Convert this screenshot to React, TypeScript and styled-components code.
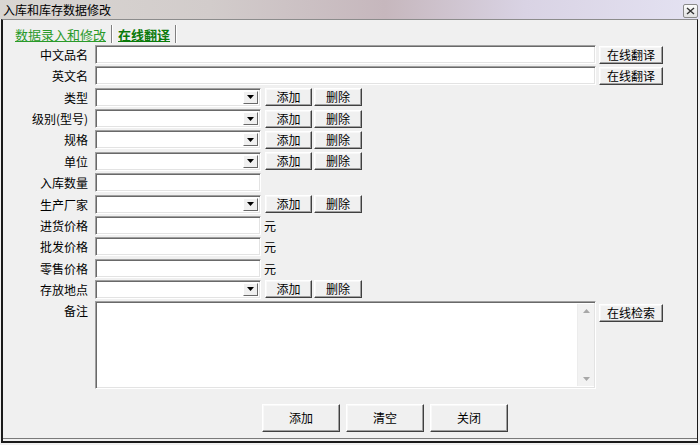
import React from "react";
import styled, { createGlobalStyle } from "styled-components";

const Global = createGlobalStyle`
  html, body { margin: 0; padding: 0; background: #f0f0f0; }
  body { font-family: "Noto Sans CJK SC", "Liberation Sans", sans-serif; font-size: 12px; color: #000; }
  * { box-sizing: border-box; }
`;

const Window = styled.div`
  width: 700px;
  height: 445px;
  background: #f0f0f0;
  display: flex;
  flex-direction: column;
  overflow: hidden;
`;

const TitleBar = styled.div`
  height: 19px;
  flex: none;
  display: flex;
  align-items: center;
  justify-content: space-between;
  padding: 0 2px 0 3px;
  background: linear-gradient(90deg, #d9d6d2 0%, #d2cccb 30%, #c6b7bd 55%, #d9d3e4 75%, #e4e2f2 100%);
`;

const Title = styled.span`
  font-size: 12px;
  line-height: 19px;
  color: #000;
`;

const CloseBtn = styled.div`
  width: 15px;
  height: 14px;
  margin-top: 2px;
  border: 1px solid #8a8a8a;
  border-radius: 2px;
  background: linear-gradient(#fbfbfb, #e2e2e2);
  display: flex;
  align-items: center;
  justify-content: center;
`;

const Panel = styled.div`
  flex: 1;
  margin: 0 2px 2px 1px;
  border-top: 1px solid #8c8c8c;
  border-left: 2px solid #1a1a1a;
  border-right: 1px solid #1a1a1a;
  border-bottom: 2px solid #1a1a1a;
  box-shadow: inset 0 -2px 0 #f0f0f0, inset 0 -3px 0 #7a7a7a;
  display: flex;
  flex-direction: column;
`;

const TabBar = styled.div`
  height: 22px;
  display: flex;
  align-items: center;
  padding-left: 9px;
  margin-top: 3px;
`;

const Tab = styled.span<{ $bold?: boolean }>`
  color: ${(p) => (p.$bold ? "#0a7a0a" : "#2a9a2a")};
  font-weight: ${(p) => (p.$bold ? 700 : 400)};
  text-decoration: underline;
  font-size: 13px;
  padding: 0 3px;
`;

const TabSep = styled.span`
  width: 2px;
  height: 18px;
  border-left: 1px solid #808080;
  border-right: 1px solid #fff;
  margin: 0 2px;
`;

const Form = styled.div`
  display: flex;
  flex-direction: column;
  gap: 2.36px;
  margin-top: 0px;
`;

const Row = styled.div<{ $top?: boolean }>`
  display: flex;
  align-items: ${(p) => (p.$top ? "flex-start" : "center")};
  min-height: 19px;
`;

const Label = styled.span`
  width: 85px;
  flex: none;
  text-align: right;
  margin-right: 7px;
  font-size: 12px;
  line-height: 19px;
  white-space: nowrap;
`;

const sunken = `
  background: #fff;
  border-style: solid;
  border-width: 1px;
  border-color: #a0a0a0 #fff #fff #a0a0a0;
  box-shadow: inset 1px 1px 0 #696969, inset -1px -1px 0 #e3e3e3;
`;

const Input = styled.div<{ $w: number }>`
  width: ${(p) => p.$w}px;
  height: 19px;
  flex: none;
  ${sunken}
`;

const Combo = styled.div`
  width: 166px;
  height: 19px;
  flex: none;
  ${sunken}
  display: flex;
  justify-content: flex-end;
  padding: 2px;
`;

const ComboArrow = styled.div`
  width: 15px;
  height: 13px;
  background: #f0f0f0;
  border: 1px solid;
  border-color: #fff #696969 #696969 #fff;
  display: flex;
  align-items: center;
  justify-content: center;
`;

const Btn = styled.button<{ $w: number; $h?: number; $ml?: number; $mt?: number }>`
  width: ${(p) => p.$w}px;
  height: ${(p) => p.$h ?? 18}px;
  margin-left: ${(p) => p.$ml ?? 0}px;
  margin-top: ${(p) => p.$mt ?? 0}px;
  flex: none;
  padding: 0;
  font-family: inherit;
  font-size: 12px;
  color: #000;
  background: #f0f0f0;
  border: 1px solid;
  border-color: #fff #404040 #404040 #fff;
  box-shadow: inset -1px -1px 0 #a0a0a0, inset 1px 1px 0 #f8f8f8;
  line-height: 1;
`;

const Unit = styled.span`
  margin-left: 3px;
  font-size: 12px;
`;

const Notes = styled.div`
  width: 501px;
  height: 88px;
  flex: none;
  ${sunken}
  display: flex;
  justify-content: flex-end;
  padding: 2px 1px 2px 2px;
`;

const ScrollTrack = styled.div`
  width: 17px;
  background: #f2f2f2;
  border-left: 1px solid #ececec;
  display: flex;
  flex-direction: column;
  justify-content: space-between;
  align-items: center;
  padding: 5px 0;
`;

const BtnRow = styled.div`
  display: flex;
  gap: 6px;
  padding-left: 259px;
  margin-top: 15px;
`;

const Tri = ({ up, color = "#000" }: { up?: boolean; color?: string }) => (
  <svg width="7" height="4" viewBox="0 0 7 4">
    <path d={up ? "M0 4 L3.5 0 L7 4 Z" : "M0 0 L7 0 L3.5 4 Z"} fill={color} />
  </svg>
);

const ComboField = () => (
  <Combo>
    <ComboArrow>
      <Tri />
    </ComboArrow>
  </Combo>
);

const AddDel = () => (
  <>
    <Btn $w={47} $ml={4}>添加</Btn>
    <Btn $w={48} $ml={2}>删除</Btn>
  </>
);

export default function App() {
  return (
    <Window>
      <Global />
      <TitleBar>
        <Title>入库和库存数据修改</Title>
        <CloseBtn>
          <svg width="9" height="8" viewBox="0 0 9 8">
            <path d="M1 1 L8 7 M8 1 L1 7" stroke="#333" strokeWidth="1.4" />
          </svg>
        </CloseBtn>
      </TitleBar>
      <Panel>
        <TabBar>
          <Tab>数据录入和修改</Tab>
          <TabSep />
          <Tab $bold>在线翻译</Tab>
          <TabSep />
        </TabBar>
        <Form>
          <Row>
            <Label>中文品名</Label>
            <Input $w={501} />
            <Btn $w={64} $ml={3}>在线翻译</Btn>
          </Row>
          <Row>
            <Label>英文名</Label>
            <Input $w={501} />
            <Btn $w={64} $ml={3}>在线翻译</Btn>
          </Row>
          <Row>
            <Label>类型</Label>
            <ComboField />
            <AddDel />
          </Row>
          <Row>
            <Label>级别(型号)</Label>
            <ComboField />
            <AddDel />
          </Row>
          <Row>
            <Label>规格</Label>
            <ComboField />
            <AddDel />
          </Row>
          <Row>
            <Label>单位</Label>
            <ComboField />
            <AddDel />
          </Row>
          <Row>
            <Label>入库数量</Label>
            <Input $w={166} />
          </Row>
          <Row>
            <Label>生产厂家</Label>
            <ComboField />
            <AddDel />
          </Row>
          <Row>
            <Label>进货价格</Label>
            <Input $w={166} />
            <Unit>元</Unit>
          </Row>
          <Row>
            <Label>批发价格</Label>
            <Input $w={166} />
            <Unit>元</Unit>
          </Row>
          <Row>
            <Label>零售价格</Label>
            <Input $w={166} />
            <Unit>元</Unit>
          </Row>
          <Row>
            <Label>存放地点</Label>
            <ComboField />
            <AddDel />
          </Row>
          <Row $top>
            <Label>备注</Label>
            <Notes>
              <ScrollTrack>
                <Tri up color="#a8a8a8" />
                <Tri color="#a8a8a8" />
              </ScrollTrack>
            </Notes>
            <Btn $w={64} $ml={3} $mt={3}>在线检索</Btn>
          </Row>
        </Form>
        <BtnRow>
          <Btn $w={78} $h={28}>添加</Btn>
          <Btn $w={78} $h={28}>清空</Btn>
          <Btn $w={78} $h={28}>关闭</Btn>
        </BtnRow>
      </Panel>
    </Window>
  );
}
